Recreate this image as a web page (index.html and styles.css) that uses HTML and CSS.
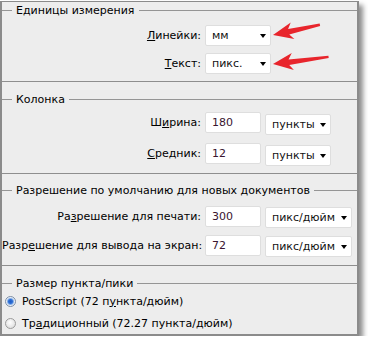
FILE: index.html
```html
<!DOCTYPE html>
<html>
<head>
  <title>Единицы измерения</title>
  <meta name="viewport" content="width=device-width, initial-scale=1">
  <link rel="stylesheet" href="styles.css">
</head>
<body>

  <div class="panel">

    <section class="group g1">
      <div class="legend"><span>Единицы измерения</span></div>
      <div class="row">
        <label class="lbl"><u>Л</u>инейки:</label>
        <div class="sel w66">мм<i class="caret"></i></div>
      </div>
      <div class="row">
        <label class="lbl"><u>Т</u>екст:</label>
        <div class="sel w66">пикс.<i class="caret"></i></div>
      </div>
    </section>

    <section class="group g2">
      <div class="legend"><span>Колонка</span></div>
      <div class="row">
        <label class="lbl">Ш<u>и</u>рина:</label>
        <div class="num">180</div>
        <div class="sel w66">пункты<i class="caret"></i></div>
      </div>
      <div class="row">
        <label class="lbl"><u>С</u>редник:</label>
        <div class="num">12</div>
        <div class="sel w66">пункты<i class="caret"></i></div>
      </div>
    </section>

    <section class="group g3">
      <div class="legend"><span>Разрешение по умолчанию для новых документов</span></div>
      <div class="row">
        <label class="lbl">Ра<u>з</u>решение для печати:</label>
        <div class="num">300</div>
        <div class="sel w87">пикс/дюйм<i class="caret"></i></div>
      </div>
      <div class="row">
        <label class="lbl">Разр<u>е</u>шение для вывода на экран:</label>
        <div class="num">72</div>
        <div class="sel w87">пикс/дюйм<i class="caret"></i></div>
      </div>
    </section>

    <section class="group g4">
      <div class="legend"><span>Размер пункта/пики</span></div>
      <div class="radio-row">
        <span class="radio on"></span>
        <span>PostScript (72 п<u>у</u>нкта/дюйм)</span>
      </div>
      <div class="radio-row">
        <span class="radio"></span>
        <span>Тр<u>а</u>диционный (72.27 пункта/дюйм)</span>
      </div>
    </section>

  </div>

  <!-- red pointers over the unit selects -->
  <svg class="arrows" width="368" height="345" viewBox="0 0 368 345">
    <polygon transform="translate(273,35) rotate(-12.3)" points="0,0 20,-8.5 16,-2.6 48,-1.2 48,1.2 16,3 20,8.5"/>
    <polygon transform="translate(273,64) rotate(-7.3)" points="0,0 20,-8.5 16,-2.6 56,-1.2 56,1.2 16,3 20,8.5"/>
  </svg>

</body>
</html>
```

FILE: styles.css
```css
body {
  margin: 0;
  background: #fff;
  font-family: "DejaVu Sans", sans-serif;
  font-size: 11px;
  color: #000;
}
.panel {
  width: 355px;
  margin-top: 1px;
  background: #ededed;
  border: 2px solid #8b8b8b;
  border-top-width: 1px;
  box-shadow: 4px 4px 5px rgba(0, 0, 0, 0.45);
}
.group {
  border-bottom: 1px solid #8e8e8e;
}
.g1 {
  padding: 1px 0 7px;
}
.g2 {
  margin-top: 10px;
  padding-bottom: 7px;
}
.g3 {
  margin-top: 9px;
  padding-bottom: 8px;
}
.g4 {
  margin-top: 10px;
  padding-bottom: 3px;
  border-bottom: none;
}
.legend {
  display: flex;
  align-items: center;
  height: 15px;
  white-space: nowrap;
}
.legend::before,
.legend::after {
  content: "";
  height: 1px;
  background: #959595;
}
.legend::before {
  width: 10px;
}
.legend::after {
  flex: 1;
}
.legend span {
  padding: 0 4px;
}
.row {
  display: flex;
  align-items: flex-start;
  margin-top: 7px;
}
.g2 .legend + .row {
  margin-top: 5px;
}
.g2 .row + .row {
  margin-top: 8px;
}
.g3 .legend + .row {
  margin-top: 8px;
}
.lbl {
  width: 199px;
  margin-right: 4px;
  text-align: right;
  line-height: 21px;
  white-space: nowrap;
}
.num,
.sel {
  height: 21px;
  box-sizing: border-box;
  background: #fff;
  border: 1px solid #dedede;
  border-radius: 2px;
  padding-left: 6px;
  line-height: 19px;
}
.num {
  width: 56px;
  color: #3a1530;
}
.sel {
  position: relative;
  color: #111;
}
.num + .sel {
  margin-left: 4px;
}
.g2 .num + .sel {
  margin-top: 2px;
}
.g3 .num + .sel {
  margin-top: 1px;
}
.w66 {
  width: 66px;
}
.w87 {
  width: 87px;
}
.caret {
  position: absolute;
  right: 4px;
  top: 8px;
  border-left: 3.5px solid transparent;
  border-right: 3.5px solid transparent;
  border-top: 4px solid #000;
}
.radio-row {
  display: flex;
  align-items: center;
  height: 16px;
  margin-top: 6px;
}
.legend + .radio-row {
  margin-top: 2px;
}
.radio {
  width: 11px;
  height: 11px;
  box-sizing: border-box;
  border-radius: 50%;
  margin: 0 6px 0 3px;
  border: 1px solid #9b9b9b;
  background: radial-gradient(circle at 45% 40%, #ffffff, #d6d6d6);
}
.radio.on {
  border-color: #7c8ea6;
  background: radial-gradient(circle, #1f5cc4 0, #2e6fd6 2px, #86aee6 3px, #e6edf6 4px, #f6f7f9 100%);
}
.arrows {
  position: absolute;
  left: 0;
  top: 0;
  pointer-events: none;
}
.arrows polygon {
  fill: #e8252c;
}
```
